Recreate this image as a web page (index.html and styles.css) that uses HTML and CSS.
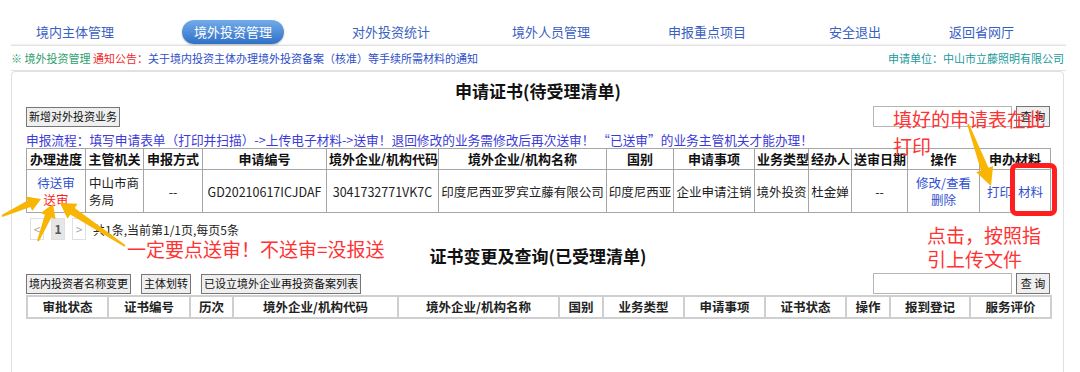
FILE: index.html
```html
<!DOCTYPE html>
<html lang="zh-CN">
<head>
  <meta charset="UTF-8" />
  <title>境外投资管理</title>
  <link rel="stylesheet" href="styles.css">
</head>
<body>
  <div class="page">
    <ul class="nav">
      <li><a href="#">境内主体管理</a></li>
      <li class="active"><a href="#">境外投资管理</a></li>
      <li><a href="#">对外投资统计</a></li>
      <li><a href="#">境外人员管理</a></li>
      <li><a href="#">申报重点项目</a></li>
      <li><a href="#">安全退出</a></li>
      <li><a href="#">返回省网厅</a></li>
    </ul>

    <div class="notice">
      <div>
        <span class="green">※ 境外投资管理</span>
        <span class="red">通知公告：</span><a href="#">关于境内投资主体办理境外投资备案（核准）等手续所需材料的通知</a>
      </div>
      <div class="unit">申请单位：中山市立藤照明有限公司</div>
    </div>

    <div class="panel">
      <h3 class="title">申请证书(待受理清单)</h3>
      <div class="toolbar">
        <button class="btn">新增对外投资业务</button>
        <div class="search">
          <input type="text" />
          <button class="btn">查 询</button>
        </div>
      </div>
      <p class="flow">申报流程：填写申请表单（打印并扫描）->上传电子材料->送审！退回修改的业务需修改后再次送审！ “已送审”的业务主管机关才能办理！</p>

      <table class="grid grid1">
        <colgroup>
          <col style="width:59px"><col style="width:58px"><col style="width:59px"><col style="width:124px">
          <col style="width:112px"><col style="width:168px"><col style="width:67px"><col style="width:81px">
          <col style="width:54px"><col style="width:43px"><col style="width:56px"><col style="width:72px">
          <col style="width:71px">
        </colgroup>
        <tr>
          <th>办理进度</th><th>主管机关</th><th>申报方式</th><th>申请编号</th><th>境外企业/机构代码</th>
          <th>境外企业/机构名称</th><th>国别</th><th>申请事项</th><th>业务类型</th><th>经办人</th>
          <th>送审日期</th><th>操作</th><th>申办材料</th>
        </tr>
        <tr>
          <td><a href="#">待送审</a><br><a href="#" class="send">送审</a></td>
          <td class="left">中山市商务局</td>
          <td>--</td>
          <td>GD20210617ICJDAF</td>
          <td>3041732771VK7C</td>
          <td>印度尼西亚罗宾立藤有限公司</td>
          <td>印度尼西亚</td>
          <td>企业申请注销</td>
          <td>境外投资</td>
          <td>杜金婵</td>
          <td>--</td>
          <td><a href="#">修改/查看</a><br><a href="#">删除</a></td>
          <td><a href="#">打印</a> <a href="#" class="mat">材料</a></td>
        </tr>
      </table>

      <div class="pager">
        <span class="pg">&lt;</span>
        <span class="pg cur">1</span>
        <span class="pg">&gt;</span>
        <span class="info">共1条,当前第1/1页,每页5条</span>
      </div>

      <h3 class="title title2">证书变更及查询(已受理清单)</h3>
      <div class="toolbar">
        <div class="btns">
          <button class="btn">境内投资者名称变更</button>
          <button class="btn">主体划转</button>
          <button class="btn">已设立境外企业再投资备案列表</button>
        </div>
        <div class="search">
          <input type="text" />
          <button class="btn">查 询</button>
        </div>
      </div>

      <table class="grid grid2">
        <colgroup>
          <col style="width:81px"><col style="width:82px"><col style="width:43px"><col style="width:165px">
          <col style="width:161px"><col style="width:44px"><col style="width:81px"><col style="width:81px">
          <col style="width:81px"><col style="width:44px"><col style="width:80px"><col style="width:81px">
        </colgroup>
        <tr>
          <th>审批状态</th><th>证书编号</th><th>历次</th><th>境外企业/机构代码</th><th>境外企业/机构名称</th>
          <th>国别</th><th>业务类型</th><th>申请事项</th><th>证书状态</th><th>操作</th><th>报到登记</th><th>服务评价</th>
        </tr>
      </table>
    </div>

    <div class="note note-print">填好的申请表在此<br>打印</div>
    <div class="note note-send">一定要点送审！不送审=没报送</div>
    <div class="note note-upload">点击，按照指<br>引上传文件</div>

    <svg class="marks" width="1080" height="372" viewBox="0 0 1080 372">
      <g fill="#f8b504">
        <polygon points="967.1,124.4 981.0,170.5 976.3,172.2 991,186 993.1,166.0 988.5,167.7 968.9,123.7" />
        <polygon points="2.4,216.9 30.4,207.0 32.2,211.1 41,199 25.8,196.5 27.6,200.6 1.6,215.1" />
        <polygon points="38.9,241.4 51.3,217.4 55.5,219.1 53,204 40.7,213.1 44.9,214.8 37.1,240.6" />
        <polygon points="125.6,245.2 74.7,208.0 77.5,203.8 60,203 67.5,218.8 70.3,214.6 124.4,246.8" />
      </g>
      <rect x="1012.5" y="165.5" width="42" height="48" rx="4" fill="none" stroke="#ff1f1f" stroke-width="5" />
    </svg>
  </div>
</body>
</html>
```

FILE: styles.css
```css
body {
  margin: 0;
  background: #fff;
  color: #222;
  font-family: "Noto Sans CJK SC", "Microsoft YaHei", sans-serif;
}

.page {
  position: relative;
  width: 1080px;
  height: 372px;
  overflow: hidden;
}

a {
  color: #3050d0;
  text-decoration: none;
}

/* top menu */
.nav {
  list-style: none;
  margin: 0;
  padding: 20px 0 0 36px;
  height: 25px;
  display: flex;
  gap: 68px;
}

.nav a {
  display: block;
  font-size: 13px;
  line-height: 24px;
  color: #3a5fc2;
}

.nav li.active a {
  padding: 0 12px;
  border-radius: 12px;
  color: #fff;
  background: linear-gradient(#73acea, #2f70c6);
  box-shadow: 0 1px 2px rgba(0,0,0,0.25);
}

.nav li:nth-child(4) { margin-left: 14px; }
.nav li:nth-child(5) { margin-left: 10px; }
.nav li:nth-child(6) { margin-left: 15px; }

/* notice bar */
.notice {
  margin: 0 14px 0 11px;
  height: 24px;
  border-top: 1px solid #e2e2e2;
  border-bottom: 1px solid #e2e2e2;
  box-shadow: 0 -1px 1px #f2f2f2;
  display: flex;
  justify-content: space-between;
  align-items: center;
  font-size: 11px;
  padding-right: 2px;
}

.notice a { color: #2f4fc8; }
.green { color: #2e9e6e; }
.red { color: #f02a2a; }
.unit { color: #1b9a9c; }

/* main panel */
.panel {
  margin: 0 16px 0 11px;
  height: 320px;
  padding: 7px 13px 0 14px;
  border: 1px solid #e0e0e0;
  border-radius: 4px;
}

.title {
  margin: 0;
  text-align: center;
  font-size: 17px;
  line-height: 24px;
  font-weight: bold;
  color: #111;
}

.title2 {
  margin-top: 4px;
}

.toolbar {
  margin-top: 3px;
  height: 21px;
  display: flex;
  justify-content: space-between;
  align-items: center;
}

.title2 + .toolbar {
  margin-top: 5px;
}

.btns {
  display: flex;
  gap: 10px;
}

.btn {
  height: 20px;
  padding: 0 2px;
  margin: 0;
  border: 1px solid #767676;
  background: #efefef;
  color: #111;
  font-family: "Noto Sans CJK SC", sans-serif;
  font-size: 11px;
  line-height: 17px;
}

.search {
  display: flex;
  align-items: center;
}

.search input {
  box-sizing: border-box;
  width: 139px;
  height: 21px;
  margin: 0;
  padding: 0;
  border: 1px solid #b5b5b5;
}

.search .btn {
  margin-left: 4px;
  width: 34px;
  height: 21px;
}

.flow {
  margin: 5px 0 0;
  font-size: 12.7px;
  line-height: 16px;
  color: #3c3ad8;
  white-space: nowrap;
}

/* tables */
.grid {
  width: 1024px;
  table-layout: fixed;
  border-collapse: collapse;
}

.grid th, .grid td {
  padding: 0 2px;
  text-align: center;
  white-space: nowrap;
  overflow: visible;
}

.grid th {
  font-size: 13px;
  line-height: 20px;
  font-weight: bold;
  color: #111;
}

.grid1 th, .grid1 td {
  border: 1px solid #a6a6a6;
}

.grid1 td {
  font-size: 12.5px;
  line-height: 17px;
  padding: 4px 1px;
  color: #222;
}

.grid1 td.left {
  text-align: left;
  white-space: normal;
  padding-left: 3px;
}

.grid1 a.send { color: #ff1a1a; }
.grid1 a.mat { margin-left: 3px; }

.grid2 {
  margin-top: 1px;
}

.grid2 th {
  border: 2px solid #cfcfcf;
  font-size: 12.5px;
  color: #222;
}

/* pager */
.pager {
  margin-top: 5px;
  height: 22px;
  padding-left: 4px;
  display: flex;
  align-items: center;
  gap: 7px;
  font-size: 12px;
}

.pg {
  box-sizing: border-box;
  width: 14px;
  height: 22px;
  border: 1px solid #e0e0e0;
  color: #aaa;
  text-align: center;
  line-height: 20px;
}

.pg.cur {
  background: #e6e6e6;
  color: #555;
  font-weight: bold;
}

.info {
  color: #222;
}

/* annotations laid over the screenshot */
.note {
  position: absolute;
  color: #ff3333;
  font-size: 19px;
  white-space: nowrap;
}

.note-print {
  left: 893px;
  top: 105px;
  line-height: 27px;
}

.note-send {
  left: 127px;
  top: 237px;
  line-height: 24px;
}

.note-upload {
  left: 927px;
  top: 223px;
  line-height: 24px;
}

.marks {
  position: absolute;
  left: 0;
  top: 0;
  pointer-events: none;
}
```
